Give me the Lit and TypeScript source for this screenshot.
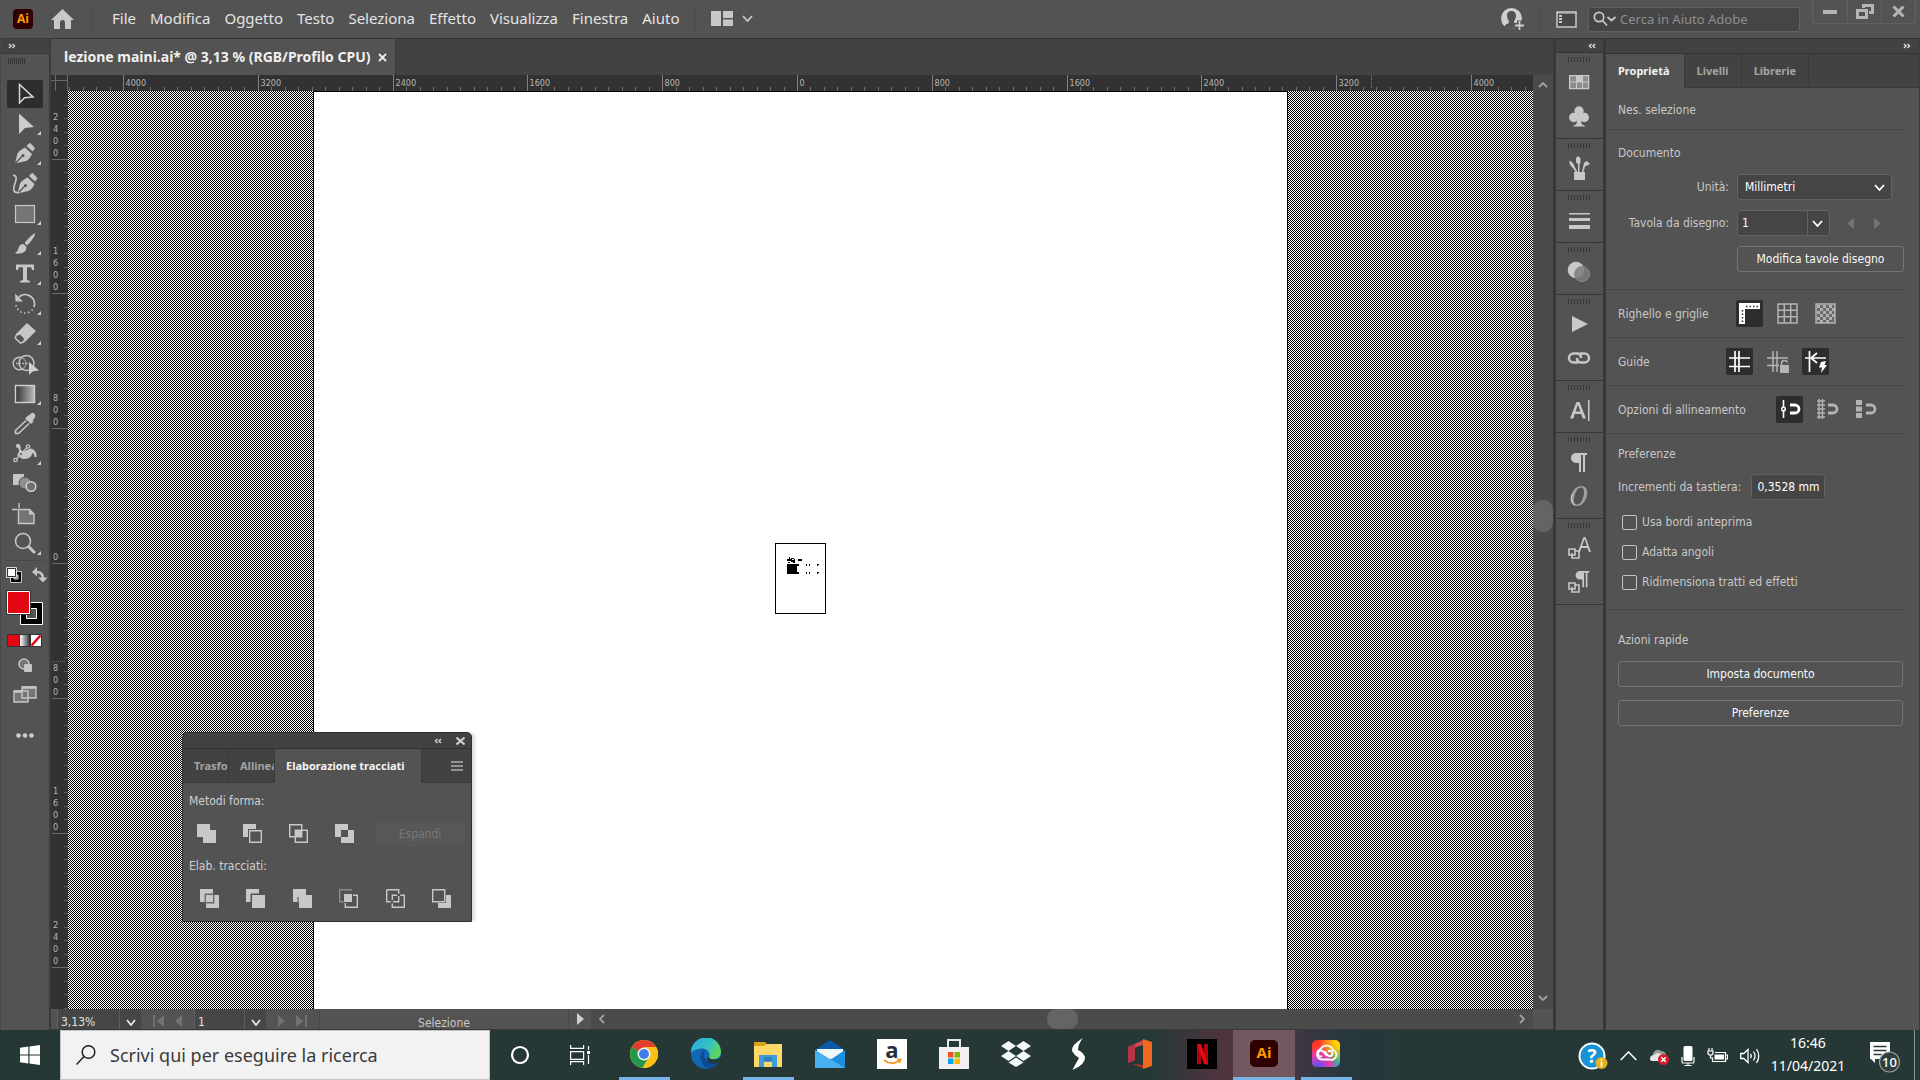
import { LitElement, html, svg, css, nothing, type TemplateResult, type SVGTemplateResult } from "lit";
import { customElement, property } from "lit/decorators.js";
import { classMap } from "lit/directives/class-map.js";

const icon = (w: number, h: number, body: SVGTemplateResult | SVGTemplateResult[]): TemplateResult =>
  html`<svg width=${w} height=${h} viewBox="0 0 ${w} ${h}" aria-hidden="true">${body}</svg>`;

const chevron = (dir: "down" | "up" | "left" | "right", w = 10, h = 6): TemplateResult => {
  const d = {
    down: `M1 1 L${w / 2} ${h - 1} L${w - 1} 1`,
    up: `M1 ${h - 1} L${w / 2} 1 L${w - 1} ${h - 1}`,
    left: `M${w - 1} 1 L1 ${h / 2} L${w - 1} ${h - 1}`,
    right: `M1 1 L${w - 1} ${h / 2} L1 ${h - 1}`,
  }[dir];
  return icon(w, h, svg`<path d=${d} fill="none" stroke="currentColor" stroke-width="1.8"/>`);
};

const doubleLeft = icon(8, 6, svg`<path d="M3.500 1 L1.500 3 L3.500 5 M7 1 L5 3 L7 5" fill="none" stroke="currentColor" stroke-width="1.500"/>`);
const doubleRight = icon(8, 6, svg`<path d="M1 1 L3 3 L1 5 M4.500 1 L6.500 3 L4.500 5" fill="none" stroke="currentColor" stroke-width="1.500"/>`);

const shared = css`
  *, *::before, *::after { box-sizing: border-box; }
  svg { display: block; flex: none; }
  button, input, select {
    font: inherit; color: inherit; margin: 0; padding: 0; border: 0;
    background: none; border-radius: 0; outline: 0; min-width: 0;
  }
  button { display: flex; align-items: center; justify-content: center; }
  select { appearance: none; }
`;

/* ---------- Top menu bar ---------- */

@customElement("menu-bar")
class MenuBar extends LitElement {
  static styles = [shared, css`
    :host {
      display: flex; align-items: center; height: 38px; background: #535353; color: #e4e4e4;
      font: 15px/20px "Noto Sans", "Open Sans", sans-serif; padding-left: 13px;
    }
    .logo {
      width: 20px; height: 20px; border-radius: 4px; background: #310000; color: #ff9a00;
      font: bold 12px/19px "Open Sans", sans-serif; text-align: center; margin-right: 18px;
    }
    .rule { width: 1px; height: 26px; background: #484848; flex: none; }
    nav { display: flex; gap: 14px; margin: 0 14px 0 20px; padding-bottom: 2px; }
    nav a { color: inherit; text-decoration: none; white-space: nowrap; }
    .home { color: #c8c8c8; margin-right: 17px; }
    .arrange { gap: 9px; color: #c8c8c8; margin-left: 16px; padding-bottom: 2px; }
    .spacer { flex: 1; }
    .user { margin-right: 14px; }
    .panel { margin: 0 11px 0 16px; }
    .find {
      display: flex; align-items: center; width: 212px; height: 25px; background: #454545;
      border: 1px solid #616161; border-radius: 3px; padding-left: 4px; margin-right: 12px;
    }
    .find input { flex: 1; font-size: 13px; padding-left: 3px; }
    .find input::placeholder { color: #8e8e8e; opacity: 1; }
    .window {
      align-self: flex-start; display: flex; height: 24px; border: 1px solid #606060; border-top: 0;
      border-radius: 0 0 4px 4px; margin-right: 4px;
    }
    .window button { width: 34px; height: 23px; }
    .window button + button { border-left: 1px solid #606060; }
  `];

  render() {
    const items = ["File", "Modifica", "Oggetto", "Testo", "Seleziona", "Effetto", "Visualizza", "Finestra", "Aiuto"];
    return html`
      <div class="logo">Ai</div>
      <button class="home" aria-label="Home">${icon(23, 20, svg`<path fill="currentColor" d="M11.500 0 L23 11 H20 V20 H14 V13.500 Q14 11 11.500 11 Q9 11 9 13.500 V20 H3 V11 H0 Z"/>`)}</button>
      <div class="rule"></div>
      <nav>${items.map((t) => html`<a href="#">${t}</a>`)}</nav>
      <div class="rule"></div>
      <button class="arrange" aria-label="Disponi documenti">
        ${icon(22, 15, svg`<path fill="currentColor" d="M0 0h10v15H0z M12 0h10v7H12z M12 8.500h10V15H12z"/>`)}
        ${chevron("down", 11, 7)}
      </button>
      <div class="spacer"></div>
      <button class="user" aria-label="Account">
        ${icon(24, 23, svg`
          <circle cx="10.500" cy="10.500" r="10.500" fill="#cfcfcf"/>
          <path fill="#535353" d="M10.500 3 C14 3 15 5.500 15 8 C15 11 13 12 13 14 C13 15.500 15 16 16 18 Q14 21 10.500 21 Q6 21 3.500 18.500 C4 16 8 16 8 14 C8 12 6 11 6 8 C6 5.500 7 3 10.500 3Z"/>
          <path stroke="#535353" stroke-width="5" d="M18.500 12.500 V23 M13.500 17.500 H24"/>
          <path stroke="#cfcfcf" stroke-width="1.800" d="M18.500 13 V22 M14 17.500 H23"/>`)}
      </button>
      <div class="rule"></div>
      <button class="panel" aria-label="Area di lavoro">
        ${icon(21, 17, svg`<rect x="1" y="1" width="19" height="15" fill="#484848" stroke="#c8c8c8" stroke-width="1.500"/>
          <path stroke="#c8c8c8" d="M0 2h21"/><path fill="#c8c8c8" d="M3 4h3v2H3zM3 7h3v2H3zM3 10h3v2H3z"/>`)}
      </button>
      <label class="find">
        ${icon(24, 16, svg`<circle cx="6" cy="6" r="4.700" fill="none" stroke="#c8c8c8" stroke-width="1.700"/><path d="M9.500 9.500 L14 14.500 M14.500 6 L18.500 9.500 L22.500 6" fill="none" stroke="#c8c8c8" stroke-width="1.700"/>`)}
        <input type="search" aria-label="Cerca" placeholder="Cerca in Aiuto Adobe" />
      </label>
      <div class="window">
        <button aria-label="Riduci">${icon(14, 4, svg`<path fill="#b4b4b4" d="M0 0h14v4H0z"/>`)}</button>
        <button aria-label="Ripristina">${icon(18, 15, svg`<path fill="none" stroke="#b4b4b4" stroke-width="3" d="M7.500 4 V1.500 H16.500 V8.500 H13 M1.500 6.500 H10.500 V13.500 H1.500Z"/>`)}</button>
        <button aria-label="Chiudi">${icon(13, 11, svg`<path stroke="#b4b4b4" stroke-width="3" d="M1.500 0.500 L11.500 10.500 M11.500 0.500 L1.500 10.500"/>`)}</button>
      </div>`;
  }
}

/* ---------- Tool column ---------- */

const C = "#c6c6c6";
const corner = svg`<path fill="#d0d0d0" d="M34 22 V26 H30Z"/>`;
const nib = svg`
  <path fill=${C} d="M8 24.500 L10.500 14.500 Q12 11.500 18 8.500 L25 15 Q22.500 20.500 19 22 Z"/>
  <path fill=${C} d="M19.500 7 L22.500 4 Q24 4 28 9.500 L25.500 12.500 Z"/>
  <path stroke="#535353" stroke-width="1.200" d="M8 24.500 L15.500 17"/><circle cx="16" cy="16.500" r="1.500" fill="#535353"/>`;

interface Tool { name: string; art: SVGTemplateResult; more?: boolean; active?: boolean }

const tools: Tool[] = [
  { name: "Selezione", active: true, art: svg`<path fill="none" stroke="#d8d8d8" stroke-width="1.500" d="M12.500 5.500 V24 L17.500 18.800 L26 18 Z"/>` },
  { name: "Selezione diretta", more: true, art: svg`<path fill="#cccccc" d="M12 4.500 V25 L18 19 L27 18 Z"/>` },
  { name: "Penna", more: true, art: nib },
  { name: "Curvatura", art: svg`<g transform="translate(2.500 0)">${nib}</g><path fill="none" stroke=${C} stroke-width="1.700" d="M6 6.500 C11 6 9 12 7.500 16 S6 24.500 12 23.500"/>` },
  { name: "Rettangolo", more: true, art: svg`<rect x="8.500" y="6.500" width="19" height="17" fill="#757575" stroke=${C} stroke-width="1.200"/>` },
  { name: "Pennello", more: true, art: svg`<path fill=${C} d="M28.500 4 Q25 5 17.500 14 L20 16.500 Q27.500 9 28.500 4Z M16.500 15 L19.500 18 Q19.500 24 12 24.500 Q9 25 8 24 Q10.500 23 11.500 19 Q12.500 15 16.500 15Z"/>` },
  { name: "Testo", more: true, art: svg`<path fill=${C} d="M9 5.500 H27 V11 H25 L24.200 8.300 H20 V21 L23 22 V23.500 H13 V22 L16 21 V8.300 H11.800 L11 11 H9Z"/>` },
  { name: "Ruota", more: true, art: svg`<path fill="none" stroke=${C} stroke-width="1.800" d="M12 8 A9.300 9.300 0 0 1 27 18"/><path fill=${C} d="M8 4.500 L8.500 12.500 L16 12.500Z"/><path fill="none" stroke=${C} stroke-width="1.600" stroke-dasharray="1.500 2.500" d="M9 16 A9.300 9.300 0 0 0 26.500 19"/>` },
  { name: "Gomma", more: true, art: svg`<path fill=${C} d="M20 4 L29 12 L18 23 L9 15Z"/><path fill="none" stroke=${C} stroke-width="1.600" d="M10 15 L8.500 18 V19.500 L13.500 24 L17.500 22.500"/><path fill="#535353" d="M9.800 17.500 L13 15.500 L17.500 20 L14 22.500Z"/>` },
  { name: "Creazione forme", art: svg`<circle cx="12.500" cy="14.500" r="6.300" fill="none" stroke=${C} stroke-width="1.400"/><circle cx="19.500" cy="14" r="7.500" fill="#535353" fill-opacity=".5" stroke=${C} stroke-width="1.400"/><path stroke=${C} stroke-width="1.600" stroke-dasharray="1.600 1.600" d="M9 14.500H23"/><path fill="#cfcfcf" d="M22 13 V26 L25.500 22.500 L32 21.500Z"/>` },
  { name: "Sfumatura", more: true, art: svg`<rect x="8.500" y="6.500" width="19" height="17" fill="url(#tg)" stroke="#d0d0d0" stroke-width="1.400"/>` },
  { name: "Contagocce", art: svg`<path fill="none" stroke=${C} stroke-width="1.700" d="M19 11.500 L8.500 21.500 V24.500 H11.500 L22 14.500"/><path fill=${C} d="M22.500 6 Q26 2 28 5.500 Q29 8 26 11 L26.500 12.500 L24 15 L18 9.500 L20.500 7Z"/>` },
  { name: "Alterazione marionetta", more: true, art: svg`<path fill=${C} d="M9 8 Q9 4 12 5 Q14 6 13.500 10 Q15 14 20 11 Q24 8 27 11 Q30 14 29.500 18 L27.500 18 Q27 14 25.500 14 Q24 20 17 20 Q14 20 12.500 18 L10 16 Q13 13 11.500 9.500Z"/><path fill="none" stroke=${C} stroke-width="1.300" d="M8.500 21 L20 8.500"/><circle cx="8.500" cy="21" r="1.700" fill="#535353" stroke=${C} stroke-width="1.300"/><circle cx="14" cy="15" r="1.500" fill="#535353" stroke=${C}/><circle cx="21" cy="7.500" r="1.700" fill="#535353" stroke=${C} stroke-width="1.300"/>` },
  { name: "Fusione", art: svg`<path fill=${C} d="M6 5h11v11H6z"/><circle cx="18" cy="14" r="6" fill="#8e8e8e" stroke="#535353"/><circle cx="24" cy="17.500" r="4.800" fill="#707070" stroke="#d2d2d2" stroke-width="1.500"/>` },
  { name: "Tavola da disegno", art: svg`<path fill="#757575" stroke=${C} stroke-width="1.400" d="M11.500 10.500 H22.500 L27 15 V24.500 H11.500Z"/><path fill=${C} d="M22 10 V15.500 H27.500Z"/><path stroke=${C} stroke-width="1.400" d="M5 10.500 H10.500 M12 4 V9"/>` },
  { name: "Zoom", more: true, art: svg`<circle cx="16" cy="12" r="7.500" fill="none" stroke=${C} stroke-width="1.600"/><path stroke=${C} stroke-width="3" d="M21 17 L28 24"/>` },
];

@customElement("tool-column")
class ToolColumn extends LitElement {
  static styles = [shared, css`
    :host { display: flex; flex-direction: column; background: #535353; border-right: 2px solid #3c3c3c; border-left: 1px solid #474747; }
    header { height: 16px; background: #424242; border: solid #383838; border-width: 1px 0; color: #d0d0d0; padding: 4px 7px; }
    .grip { height: 6px; width: 18px; margin: 4px 0 16px 7px; background: repeating-linear-gradient(90deg, #353535 0 1px, transparent 1px 2px); }
    .tool { width: 36px; height: 28px; margin: 0 0 2px 6px; }
    .tool svg { margin: -1px 0; }
    .active { background: #2d2d2d; border-radius: 2px; }
    .swatches { border-top: 1px solid #494949; margin: 0 5px 2px; padding-top: 6px; }
    .extra { height: 48px; width: 36px; margin-left: 6px; }
  `];

  render() {
    return html`
      <header>${doubleRight}</header>
      <div class="grip"></div>
      ${tools.map((t) => html`
        <button class=${classMap({ tool: true, active: !!t.active })} aria-label=${t.name}>
          ${icon(36, 30, svg`<defs><linearGradient id="tg"><stop offset="0" stop-color="#333"/><stop offset="1" stop-color="#bbb"/></linearGradient></defs>${t.art}${t.more ? corner : nothing}`)}
        </button>`)}
      <div class="swatches">
        ${icon(42, 82, svg`
          <defs><linearGradient id="sg"><stop offset="0" stop-color="#fff"/><stop offset="1" stop-color="#444"/></linearGradient></defs>
          <path fill="none" stroke="#c6c6c6" d="M4.500 4.500h11v11h-11z"/><path fill="#000" d="M5 5h10v10H5z"/><path fill="#535353" stroke="#ddd" d="M8 8h4v4H8z"/>
          <path fill="#fff" stroke="#333" stroke-width="1" d="M1.500 1.500h8v8h-8z"/><path fill="none" stroke="#d8d8d8" d="M.5 .5h10v10h-10z"/>
          <path fill="none" stroke="#c6c6c6" stroke-width="2.600" d="M30 5 Q37 4.500 37 12"/><path fill="#c6c6c6" d="M31 0 V9.500 L26 5Z M32 10.500 H41.500 L37 15.500Z"/>
          <path fill="#000" stroke="#fff" d="M14.500 35.500 h22 v22 h-22z"/><path fill="#535353" stroke="#fff" d="M20.500 41.500h10v10h-10z"/>
          <path fill="#e30613" stroke="#fff" d="M1.500 24.500 h22 v22 h-22z"/><path fill="none" stroke="#333" d="M.5 23.500 h24 v24 h-24z"/>
          <path fill="#333" d="M1 67 h35v13H1z"/><path fill="#e30613" d="M2 68h11v11H2z"/><path fill="url(#sg)" d="M14 68h9v11h-9z"/>
          <path fill="#fff" d="M25 68h10v11H25z"/><path stroke="#e30613" stroke-width="2.500" d="M25.500 78.500 L34.500 68.500"/>`)}
      </div>
      <button class="tool" aria-label="Modalità di disegno">${icon(14, 14, svg`<circle cx="6" cy="6" r="5" fill="#757575" stroke=${C} stroke-width="1.500"/><rect x="6" y="6" width="8" height="8" rx="1" fill=${C}/>`)}</button>
      <button class="tool" aria-label="Modalità schermo">${icon(24, 18, svg`<path fill="#757575" stroke=${C} stroke-width="1.400" d="M1 5h14v11H1zM9 1h14v11H9z"/><path stroke=${C} stroke-width="2.500" d="M1 5.500h8M9 1.500h14"/>`)}</button>
      <button class="extra" aria-label="Altri strumenti">${icon(18, 5, svg`<g fill="#cfcfcf"><circle cx="2.500" cy="2.500" r="2.300"/><circle cx="9" cy="2.500" r="2.300"/><circle cx="15.500" cy="2.500" r="2.300"/></g>`)}</button>`;
  }
}

/* ---------- Document window ---------- */

const TICK = 13.476; /* one minor ruler division, in pixels */

@customElement("ruler-strip")
class RulerStrip extends LitElement {
  @property({ type: Boolean }) vertical = false;
  @property({ type: Number }) zero = 0;
  @property({ type: Number }) cursor = 0;
  @property({ type: Number }) before = 54;
  @property({ type: Number }) after = 54;

  static styles = [shared, css`
    :host { display: block; overflow: hidden; background: #323232; min-width: 0; min-height: 0; contain: size; }
    text { font: 9px "DejaVu Sans Condensed", "DejaVu Sans", sans-serif; fill: #b6b6b6; }
    path { shape-rendering: crispEdges; }
  `];

  render() {
    const ticks = Array.from({ length: this.before + this.after + 1 }, (_, i) => i - this.before);
    const at = (i: number) => Math.round(this.zero + i * TICK) + 0.5;
    const major = ticks.filter((i) => i % 10 === 0);
    const minor = ticks.filter((i) => i % 10 !== 0);
    if (this.vertical) {
      return html`<svg width="100%" height="100%" aria-hidden="true">
        <path stroke="#5a5a5a" d=${minor.map((i) => `M13 ${at(i)}h4`).join("")}/>
        <path stroke="#6a6a6a" d=${major.map((i) => `M1 ${at(i)}h16`).join("")}/>
        <path stroke="#6a6a6a" stroke-dasharray="1 1" d="M1 ${this.cursor + 0.5}h14"/>
        ${major.map((i) => {
          const digits = String(Math.abs(i) * 80).split("");
          return digits.map((c, k) => svg`<text x="2" y=${at(i) - 4 - (digits.length - 1 - k) * 12}>${c}</text>`);
        })}
      </svg>`;
    }
    return html`<svg width="100%" height="100%" aria-hidden="true">
      <path stroke="#6e6e6e" d=${minor.map((i) => `M${at(i)} 12v4`).join("")}/>
      <path stroke="#808080" d=${major.map((i) => `M${at(i)} 0v16`).join("")}/>
      <path stroke="#808080" stroke-dasharray="1 1" d="M${this.cursor + 0.5} 0v14"/>
      ${major.map((i) => svg`<text x=${at(i) + 2} y="11">${Math.abs(i) * 80}</text>`)}
    </svg>`;
  }
}

@customElement("document-window")
class DocumentWindow extends LitElement {
  static styles = [shared, css`
    :host {
      display: grid; grid-template: 37px 16px 1fr 21px / 17px 1fr 20px; min-width: 0; min-height: 0;
      background: #424242; position: relative; color: #e0e0e0;
      font: 12px/16px "DejaVu Sans Condensed", "DejaVu Sans", sans-serif;
    }
    .tabs { grid-column: 1 / -1; border-top: 1px solid #333; }
    .tab {
      display: inline-flex; align-items: center; gap: 8px; height: 36px; padding: 0 8px 0 13px; background: #535353;
      font: bold 14px/16px "Noto Sans", "Open Sans", sans-serif; color: #f0f0f0; border-right: 1px solid #3a3a3a;
    }
    .corner { background: #323232; }
    .canvas {
      grid-column: 2; grid-row: 3; display: flex; justify-content: center; overflow: hidden; position: relative;
      background: conic-gradient(#000 25%, #fff 0 50%, #000 0 75%, #fff 0) 0 0 / 2px 2px;
    }
    .left { grid-column: 1; grid-row: 3; }
    .sheet { width: 975px; background: #fff; border: 1px solid #000; border-bottom: 0; }
    .artboard { position: absolute; left: calc(50% - 26px); top: 452px; border: 1px solid #000; }
    .vbar {
      grid-column: 3; grid-row: 2 / 4; background: #4b4b4b; color: #a0a0a0; display: flex; flex-direction: column;
      align-items: center; padding: 7px 0 8px; position: relative;
    }
    .thumb { background: #646464; border-radius: 9px; }
    .vbar .thumb { width: 20px; height: 32px; }
    .above { flex: 408; }
    .below { flex: 459; }
    .status { grid-column: 1 / -1; display: flex; background: #535353; border-bottom: 1px solid #3a3a3a; align-items: stretch; overflow: hidden; }
    .status input { width: 50px; height: 20px; background: #464646; padding: 5px 0 0 3px; border-left: 1px solid #606060; }
    .status .drop { width: 22px; background: #464646; padding-top: 6px; border-left: 1px solid #5c5c5c; color: #e8e8e8; }
    .zoom { display: flex; margin-left: 6px; }
    .zoom input { width: 62px; }
    .pager { display: flex; justify-content: center; gap: 11px; width: 53px; color: #727272; padding-top: 4px; }
    .mode { width: 250px; border-left: 1px solid #484848; border-right: 1px solid #484848; text-align: center; padding-top: 6px; color: #c8c8c8; }
    .play { width: 22px; color: #d0d0d0; }
    .hbar { flex: 1; background: #4b4b4b; display: flex; align-items: center; color: #a0a0a0; padding: 0 8px; }
    .hbar .thumb { width: 31px; height: 20px; }
    .hbar .before { flex: 442; }
    .hbar .after { flex: 441; }
    .end { width: 20px; background: #535353; }
  `];

  render() {
    return html`
      <div class="tabs">
        <div class="tab"><span>lezione maini.ai* @ 3,13 % (RGB/Profilo CPU)</span>
          <button aria-label="Chiudi">${icon(9, 9, svg`<path stroke="#eee" stroke-width="1.800" d="M1 1 L8 8 M8 1 L1 8"/>`)}</button>
        </div>
      </div>
      <div class="corner">${icon(17, 16, svg`<path stroke="#6a6a6a" d="M4.500 0V16M0 5.500H16M16.500 0V16"/>`)}</div>
      <ruler-strip .zero=${729} .cursor=${1303}></ruler-strip>
      <ruler-strip class="left" vertical .zero=${472} .cursor=${570} .before=${34} .after=${39}></ruler-strip>
      <div class="vbar">
        ${chevron("up", 10, 6)}
        <div class="above"></div><div class="thumb"></div><div class="below"></div>
        ${chevron("down", 10, 6)}
      </div>
      <div class="canvas">
        <div class="sheet"></div>
        <div class="artboard">${icon(49, 69, svg`
          <g shape-rendering="crispEdges" fill="#000">
            <path d="M11 20h10v10H11zM21 20h2v2h-2zM21 28h2v2h-2zM13 13h1v2h-1zM15 14h3v1h-3zM11 15h3v2h-3zM15 16h3v2h-3zM18 15h1v3h-1zM12 18h2v1h-2zM17 18h2v1h-2zM14 15h2v2h-2zM22 15h4v2h-4zM30 20h1v2h-1zM33 20h1v2h-1zM30 28h1v2h-1zM33 28h1v2h-1zM41 20h2v1h-2zM41 21h1v1h-1zM41 28h2v1h-2zM41 29h1v1h-1z"/>
          </g>`)}</div>
        </div>
      <div class="status">
        <div class="zoom"><input aria-label="Zoom" value="3,13%" /><button class="drop" aria-label="Livelli di zoom">${chevron("down", 10, 7)}</button></div>
        <div class="pager">
          <button aria-label="Prima">${icon(11, 12, svg`<path fill="currentColor" d="M0 0h2v12H0zM11 0v12L3.500 6z"/>`)}</button>
          <button aria-label="Precedente">${icon(7, 12, svg`<path fill="currentColor" d="M7 0v12L0 6z"/>`)}</button>
        </div>
        <input aria-label="Tavola da disegno" value="1" /><button class="drop" aria-label="Elenco tavole">${chevron("down", 10, 7)}</button>
        <div class="pager">
          <button aria-label="Successiva">${icon(7, 12, svg`<path fill="currentColor" d="M0 0v12L7 6z"/>`)}</button>
          <button aria-label="Ultima">${icon(11, 12, svg`<path fill="currentColor" d="M9 0h2v12H9zM0 0v12L7.500 6z"/>`)}</button>
        </div>
        <div class="mode">Selezione</div>
        <button class="play" aria-label="Mostra">${icon(7, 12, svg`<path fill="currentColor" d="M0 0v12L7 6z"/>`)}</button>
        <div class="hbar">${chevron("left", 6, 10)}<div class="before"></div><div class="thumb"></div><div class="after"></div>${chevron("right", 6, 10)}</div>
        <div class="end"></div>
      </div>`;
  }
}

/* ---------- Pathfinder panel ---------- */

const L = "#c8c8c8";
const shapeModes = [
  ["Unisci", svg`<path fill=${L} d="M0 0h13v6h6v13H6v-6H0z"/>`],
  ["Sottrai", svg`<path fill=${L} d="M0 0h13v5H5v8H0z"/><path fill="none" stroke=${L} stroke-width="1.400" d="M6.700 6.700h11.600v11.600H6.700z"/>`],
  ["Interseca", svg`<path fill="none" stroke=${L} stroke-width="1.400" d="M.7 .7h12v12h-12zM6.300 6.300h12v12h-12z"/><path fill=${L} d="M6 6h7v7H6z"/>`],
  ["Escludi", svg`<path fill=${L} fill-rule="evenodd" d="M0 0h13v6h6v13H6v-6H0zM6 6v7h7V6z"/>`],
] as const;
const pathfinders = [
  ["Dividi", svg`<path fill=${L} d="M0 0h13v6h6v13H6v-6H0z"/><path fill="none" stroke="#6a6a6a" stroke-width="1.400" d="M5.300 5.300h8.400v8.400H5.300z"/>`],
  ["Taglia", svg`<path fill=${L} d="M0 0h13v4.500H4.500V13H0zM6 6h13v13H6z"/>`],
  ["Combina", svg`<path fill=${L} d="M0 0h13v6h6v13H6v-6H0z"/><path stroke="#6a6a6a" stroke-width="1.400" d="M5 8v6"/>`],
  ["Ritaglia", svg`<path fill="none" stroke="#8c8c8c" stroke-width="1.400" d="M13 .7H.7v12h4"/><path fill="none" stroke=${L} stroke-width="1.400" d="M14 6.300h4.300v12h-12V14"/><path fill=${L} d="M5 5h8v8H5z"/>`],
  ["Contorno", svg`<path fill="none" stroke=${L} stroke-width="1.400" d="M.7 .7h12v4M.7 .7v12h4M6.300 14.500v3.800h12v-12h-4M12.700 7v5.700H7M6.300 11V6.300H11"/>`],
  ["Meno sotto", svg`<path fill=${L} d="M14 6h5v13H6v-5h8z"/><path fill="none" stroke=${L} stroke-width="1.400" d="M.7 .7h12v12h-12z"/>`],
] as const;

@customElement("pathfinder-panel")
class PathfinderPanel extends LitElement {
  static styles = [shared, css`
    :host {
      display: block; width: 290px; background: #535353; border: 1px solid #303030; border-radius: 5px 5px 0 0; color: #d0d0d0;
      font: 12px/16px "DejaVu Sans Condensed", "DejaVu Sans", sans-serif; box-shadow: 4px 0 3px -1px #00000022; padding-bottom: 6px;
    }
    header { display: flex; align-items: center; justify-content: flex-end; gap: 14px; height: 16px; padding-right: 6px; background: #424242; border-bottom: 1px solid #303030; border-radius: 5px 5px 0 0; }
    .tabs { display: flex; height: 34px; background: #424242; font: bold 11px/32px "Noto Sans", "Open Sans", sans-serif; border-bottom: 1px solid #3a3a3a; margin-bottom: 10px; color: #a4a4a4; }
    .tabs button { width: 46px; justify-content: flex-start; overflow: hidden; padding-left: 11px; border-right: 1px solid #3a3a3a; white-space: nowrap; }
    .tabs button.on { width: 147px; background: #535353; color: #f4f4f4; height: 34px; }
    .tabs .menu { margin-left: auto; width: 28px; border: 0; padding: 0 0 0 8px; }
    p { margin: 0 6px; }
    .row { display: flex; align-items: center; height: 49px; padding-right: 6px; }
    .row button { width: 46px; }
    .row.wide { height: 34px; margin-top: 7px; padding-left: 3px; }
    .row.wide button { width: 47px; }
    .row .expand { margin-left: 8px; flex: 1; height: 24px; background: #575757; color: #777; }
  `];

  render() {
    return html`
      <header>
        <button aria-label="Riduci">${doubleLeft}</button>
        <button aria-label="Chiudi">${icon(9, 8, svg`<path stroke="#d0d0d0" stroke-width="2" d="M.5 .5 L8.500 7.500 M8.500 .5 L.5 7.500"/>`)}</button>
      </header>
      <div class="tabs">
        <button>Trasfo</button><button>Allinea</button><button class="on">Elaborazione tracciati</button>
        <button class="menu" aria-label="Menu">${icon(12, 10, svg`<path stroke="#b0b0b0" stroke-width="1.300" d="M0 1h12M0 5h12M0 9h12"/>`)}</button>
      </div>
      <p>Metodi forma:</p>
      <div class="row">
        ${shapeModes.map(([n, a]) => html`<button aria-label=${n}>${icon(19, 19, a)}</button>`)}
        <button class="expand" disabled>Espandi</button>
      </div>
      <p>Elab. tracciati:</p>
      <div class="row wide">${pathfinders.map(([n, a]) => html`<button aria-label=${n}>${icon(19, 19, a)}</button>`)}</div>`;
  }
}

/* ---------- Collapsed panel dock ---------- */

const pilcrow = svg`<path fill=${L} d="M8 0H19V2H17V19H15V2H13V19H11V10H8A5 5 0 0 1 8 0Z"/>`;
const dockGroups: [string, SVGTemplateResult][][] = [
  [
    ["Campioni", svg`<g transform="translate(2 5)"><path fill="#8c8c8c" stroke=${L} stroke-width="1.300" d="M.6 .6h19v13H.6z"/><path fill=${L} d="M8 1h6v6H8z"/><path stroke=${L} d="M.5 7h19M7.500 0v14M13.500 0v14"/></g>`],
    ["Simboli", svg`<g fill=${L}><circle cx="12" cy="7" r="4.700"/><circle cx="6.700" cy="13.500" r="4.700"/><circle cx="17.300" cy="13.500" r="4.700"/><path d="M11 10h2.500l1 10 4 2.500h-13l4-2.500z"/></g>`],
  ],
  [["Pennelli", svg`<path fill=${L} d="M7 16h11v8H7zM2.500 4.500Q7 7 7.500 10.500L10.500 16H8.500L6 12Q2 9 2.500 4.500zM9 2l2-2 2.500 2v4.500L12.500 8v8h-1.500V8L9 6.500zM15 16l1.500-7Q17 5.500 20 5l3 3-3 1.500-2 1L16.500 16z"/>`]],
  [["Traccia", svg`<path fill=${L} d="M2 5h21v1.600H2zM2 10h21v3H2zM2 17h21v4H2z"/>`]],
  [["Trasparenza", svg`<circle cx="9" cy="10" r="8.300" fill=${L}/><circle cx="15" cy="14" r="7.500" fill="#7c7c7c" fill-opacity=".85" stroke="#8c8c8c"/>`]],
  [
    ["Azioni", svg`<path fill=${L} d="M5 4v16l16-8z"/>`],
    ["Collegamenti", svg`<g fill="none" stroke=${L} stroke-width="2.500"><path d="M11 16.500H6.500a4.500 4.500 0 0 1 0-9H10q4 0 4 4.500"/><path d="M13 7.500h4.500a4.500 4.500 0 0 1 0 9H14q-4 0-4-4.500"/></g>`],
  ],
  [["Carattere", svg`<path fill=${L} fill-rule="evenodd" d="M3 20.500 L9.500 4h3L19 20.500h-3.300L14.300 16H7.700L6.300 20.500zM8.600 13.500h4.800L11 6.800z"/><path fill=${L} d="M21 2h1.500v21H21z"/>`]],
  [
    ["Paragrafo", svg`<g transform="translate(1 3)">${pilcrow}</g>`],
    ["OpenType", svg`<path fill="#a0a0a0" fill-rule="evenodd" d="M14 2 C19 2 21 6 20 11 C19 17 15 22 10 22 C5 22 3 18 4 13 C5 7 9 2 14 2Z M14 3.500 C10 3.500 7.500 10 7 15 C6.700 19 8 20.500 10 20.500 C14 20.500 16.500 14 17 9 C17.300 5 16 3.500 14 3.500Z"/><path fill="none" stroke="#d4d4d4" d="M8 21 C4 19 3.500 15 5 10"/>`],
  ],
  [
    ["Stili di carattere", svg`<path fill="none" stroke=${L} stroke-width="1.600" d="M2 13h6v6H2zM5 17v5h7v-7H8"/><path fill=${L} fill-rule="evenodd" d="M11 16 L16.500 1h2L24 16h-2L20.500 12h-6L13 16zM15 10h5l-2.500-7z"/>`],
    ["Stili di paragrafo", svg`<path fill="none" stroke=${L} stroke-width="1.600" d="M2 13h6v6H2zM5 17v5h7v-7H8"/><g transform="translate(6 1) scale(.85)">${pilcrow}</g>`],
  ],
];

@customElement("panel-dock")
class PanelDock extends LitElement {
  static styles = [shared, css`
    :host { display: block; background: #535353; border: solid #383838; border-width: 0 3px; }
    header { display: flex; align-items: center; justify-content: flex-end; height: 15px; padding-right: 7px; background: #424242; border: solid #333; border-width: 1px 0; color: #d8d8d8; }
    section { display: grid; justify-items: center; grid-auto-rows: 34px; padding: 12px 0 5px; border-bottom: 1px solid #363636; position: relative; }
    section::before {
      content: ""; position: absolute; top: 4px; left: 12px; width: 24px; height: 5px;
      background: repeating-linear-gradient(90deg, #353535 0 1px, transparent 1px 3px);
    }
  `];
  render() {
    return html`<header>${doubleLeft}</header>
      ${dockGroups.map((g) => html`<section>${g.map(([n, a]) => html`<button aria-label=${n}>${icon(25, 25, a)}</button>`)}</section>`)}`;
  }
}

/* ---------- Properties panel ---------- */

const magnet = svg`<path fill="none" stroke="currentColor" stroke-width="2.800" d="M11 6h5a4 4 0 0 1 0 8h-5"/>`;
const toggles: Record<string, [string, boolean, SVGTemplateResult][]> = {
  rulers: [
    ["Righelli", true, svg`<path fill="#fff" d="M0 0h21v6H6v15H0z"/><path stroke="#2d2d2d" stroke-width="1.500" stroke-dasharray="1.500 2" d="M7 3.500h13M3.500 7v13"/>`],
    ["Griglia", false, svg`<path fill="none" stroke="currentColor" stroke-width="1.500" d="M1 1h19v19H1zM7.300 1v19M13.700 1v19M1 7.300h19M1 13.700h19"/>`],
    ["Griglia trasparenza", false, svg`<path fill="#6a6a6a" stroke="currentColor" stroke-width="1.400" d="M1 1h19v19H1z"/><path fill="#b0b0b0" d="M2 2h3v3H2zM8 2h3v3H8zM14 2h3v3h-3zM5 5h3v3H5zM11 5h3v3h-3zM17 5h3v3h-3zM2 8h3v3H2zM8 8h3v3H8zM14 8h3v3h-3zM5 11h3v3H5zM11 11h3v3h-3zM17 11h3v3h-3zM2 14h3v3H2zM8 14h3v3H8zM14 14h3v3h-3zM5 17h3v3H5zM11 17h3v3h-3z"/>`],
  ],
  guides: [
    ["Mostra guide", true, svg`<path stroke="currentColor" stroke-width="1.700" d="M6 0v21M10 0v21M0 7h21M0 15.500h21"/>`],
    ["Blocca guide", false, svg`<path stroke="currentColor" stroke-width="1.500" d="M6 0v21M10 0v21M0 7h21M0 14.500h12"/><path fill="#535353" d="M12 8h10v13H12z"/><path fill="currentColor" d="M13 14h9v8h-9z"/><path fill="none" stroke="currentColor" stroke-width="1.500" d="M14.500 14v-1.500q0-3 3-3 2.500 0 3 2"/>`],
    ["Guide sensibili", true, svg`<path fill="none" stroke="currentColor" stroke-width="1.700" d="M4.500 0v21M0 7h21M12 2l-6 5 6 5"/><path fill="currentColor" d="M16 11l5-1-1.500 4h2.500l-6 8 1-5.500h-3z"/>`],
  ],
  snap: [
    ["Allinea al punto", true, svg`<path stroke="currentColor" stroke-width="1.600" d="M4.500 1v18"/><circle cx="4.500" cy="10" r="1.800" fill="#2d2d2d" stroke="currentColor" stroke-width="1.500"/>${magnet}`],
    ["Allinea alla griglia", false, svg`<path fill="none" stroke="currentColor" stroke-width="1.400" d="M2 0v20M5.500 0v20M0 2h8M0 6h8M0 10h8M0 14h8M0 18h8"/>${magnet}`],
    ["Allinea ai pixel", false, svg`<path fill="currentColor" d="M1 1h6v5H1zM1 7.500h6v5H1zM1 14h6v5H1z"/>${magnet}`],
  ],
};

@customElement("properties-panel")
class PropertiesPanel extends LitElement {
  static styles = [shared, css`
    :host {
      display: block; background: #535353; color: #c8c8c8; border-right: 1px solid #3c3c3c;
      font: 12px/16px "DejaVu Sans Condensed", "DejaVu Sans", sans-serif;
    }
    header { display: flex; align-items: center; justify-content: flex-end; height: 16px; padding-right: 8px; background: #424242; border: solid #333; border-width: 1px 0; color: #d8d8d8; }
    .tabs { display: flex; height: 34px; background: #424242; font: bold 11px/32px "Noto Sans", "Open Sans", sans-serif; color: #a4a4a4; border-bottom: 1px solid #3a3a3a; }
    .tabs button { padding: 0 12px; border-right: 1px solid #3a3a3a; }
    .tabs button.on { background: #535353; color: #f4f4f4; height: 34px; padding: 0 14px 0 12px; }
    .block { margin-right: 15px; padding-left: 12px; border-bottom: 1px solid #494949; }
    .block:last-child { border: 0; padding-right: 1px; }
    h2 { font: inherit; margin: 0; }
    .none { padding-top: 14px; height: 42px; }
    .doc { height: 160px; padding-top: 15px; }
    .form { display: grid; grid-template-columns: 111px 1fr; gap: 10px 8px; align-items: center; margin-top: 13px; }
    .form label { text-align: right; white-space: nowrap; }
    .pick { display: grid; width: 155px; height: 26px; border: 1px solid #636363; border-radius: 3px; background: #454545; color: #fff; align-items: center; }
    .pick > * { grid-area: 1 / 1; }
    .pick select { height: 24px; padding-left: 7px; }
    .pick svg { justify-self: end; margin-right: 6px; pointer-events: none; }
    .board { display: flex; align-items: center; color: #737373; }
    .pick.num { width: 93px; margin-right: 17px; }
    .pick.num select { padding-left: 4px; background: linear-gradient(#636363, #636363) 69px 0 / 1px 100% no-repeat; }
    .board button + button { margin-left: 20px; }
    .outline { height: 26px; border: 1px solid #737373; border-radius: 3px; color: #f8f8f8; width: 100%; }
    .form .outline { grid-column: 2; width: 167px; }
    .toggles { display: flex; align-items: center; height: 48px; }
    .toggles button { width: 27px; height: 27px; border-radius: 2px; color: #b4b4b4; }
    .toggles button + button { margin-left: 11px; }
    .toggles button.on { background: #2d2d2d; color: #fff; }
    .rulers h2 { width: 118px; }
    .guides h2 { width: 108px; }
    .snap h2 { width: 158px; }
    .prefs { height: 176px; padding-top: 12px; }
    .step { display: flex; align-items: center; gap: 10px; margin: 12px 0; }
    .step input { width: 74px; height: 26px; border: 1px solid #616161; border-radius: 3px; background: #454545; color: #fff; padding-left: 5px; }
    .check { display: flex; align-items: center; gap: 5px; margin: 0 0 14px 4px; height: 16px; }
    .step + .check { margin-top: 14px; }
    .check input { appearance: none; width: 15px; height: 15px; border: 1px solid #c4c4c4; border-radius: 2px; }
    .actions { padding-top: 22px; display: grid; gap: 13px; }
  `];

  private toggleRow(kind: string, title: string) {
    return html`<div class="block toggles ${kind}"><h2>${title}</h2>
      ${toggles[kind].map(([n, on, a]) => html`<button class=${classMap({ on })} aria-label=${n}>${icon(22, 22, a)}</button>`)}
    </div>`;
  }

  render() {
    return html`
      <header>${doubleRight}</header>
      <div class="tabs"><button class="on">Proprietà</button><button>Livelli</button><button>Librerie</button></div>
      <div class="block none">Nes. selezione</div>
      <div class="block doc">
        <h2>Documento</h2>
        <div class="form">
          <label for="unit">Unità:</label>
          <div class="pick"><select id="unit"><option>Millimetri</option></select>${chevron("down", 11, 7)}</div>
          <label for="board">Tavola da disegno:</label>
          <div class="board">
            <div class="pick num"><select id="board"><option>1</option></select>${chevron("down", 11, 7)}</div>
            <button aria-label="Precedente">${icon(7, 11, svg`<path fill="currentColor" d="M7 0v11L0 5.500z"/>`)}</button>
            <button aria-label="Successiva">${icon(7, 11, svg`<path fill="currentColor" d="M0 0v11l7-5.500z"/>`)}</button>
          </div>
          <button class="outline">Modifica tavole disegno</button>
        </div>
      </div>
      ${this.toggleRow("rulers", "Righello e griglie")}
      ${this.toggleRow("guides", "Guide")}
      ${this.toggleRow("snap", "Opzioni di allineamento")}
      <div class="block prefs">
        <h2>Preferenze</h2>
        <div class="step"><label for="inc">Incrementi da tastiera:</label><input id="inc" value="0,3528 mm" /></div>
        ${["Usa bordi anteprima", "Adatta angoli", "Ridimensiona tratti ed effetti"].map((t) => html`<label class="check"><input type="checkbox" />${t}</label>`)}
      </div>
      <div class="block actions">
        <h2>Azioni rapide</h2>
        <button class="outline">Imposta documento</button>
        <button class="outline">Preferenze</button>
      </div>`;
  }
}

/* ---------- Taskbar ---------- */

interface App { name: string; art: SVGTemplateResult; open?: boolean; active?: boolean }
const apps: App[] = [
  { name: "Chrome", open: true, art: svg`<circle cx="16" cy="16" r="14" fill="#fbc116"/><path fill="#e33b2e" d="M16 16 L3.900 9 A14 14 0 0 1 28.100 9 H16Z"/><path fill="#229a4c" d="M16 16 L3.900 9 A14 14 0 0 0 14.500 29.900 L21 19Z"/><path fill="#fbc116" d="M28.100 9 A14 14 0 0 1 14.500 29.900 L21.500 18 L20 9.500Z"/><circle cx="16" cy="16" r="6.500" fill="#f4f4f4"/><circle cx="16" cy="16" r="5" fill="#3f7de8"/>` },
  { name: "Edge", art: svg`<defs><linearGradient id="e1" x1="0" y1="0" x2="1" y2=".5"><stop offset="0" stop-color="#2aa7e0"/><stop offset=".6" stop-color="#35c1c8"/><stop offset="1" stop-color="#5fd65a"/></linearGradient></defs><circle cx="16" cy="16" r="15" fill="#1267b5"/><path fill="url(#e1)" d="M1 15 A15 15 0 0 1 31 13.500 C31 20 26 21.500 21.500 21 C18 20.500 19 18.500 19.500 17 C20 13 16 10.500 12 10.500 C7 10.500 2 13 1 15Z"/><path fill="#0d4a92" d="M10.500 18 C10.500 13 14 11.500 15 12.500 C11 20 18 27 28 24.500 A15 15 0 0 1 18 31 C13 29 10.500 23 10.500 18Z"/><path fill="#243836" d="M19.500 18 C18 20 21 22 25 21.500 Q29 21.500 31 19 L31 22 Q28 26 23 25.500 C17 25 15 20 19.500 18Z"/>` },
  { name: "Esplora file", open: true, art: svg`<path fill="#d9a218" d="M2 4h11l3 3v4H2z"/><path fill="#ffd968" d="M2 8h10l3-2h15v23H2z"/><path fill="#3f9bdc" d="M7 17h18v12h-5v-5h-8v5H7z"/><path fill="#2f7fbf" d="M12 19h8v4h-8z"/>` },
  { name: "Posta", art: svg`<path fill="#0a5ba8" d="M1 12 L16 2 L31 12 V20 H1z"/><path fill="#f1f6fb" d="M3 11h26v10H3z"/><path fill="#1d8fdf" d="M1 12 L16 22 L31 12 V30 H1z"/><path fill="#46b0f0" d="M1 12 L16 21 L31 30 H1z"/>` },
  { name: "Amazon", art: svg`<path fill="#fff" d="M1 1h30v30H1z"/><text x="16" y="20" text-anchor="middle" font-family="Open Sans, sans-serif" font-weight="bold" font-size="22" fill="#232f3e">a</text><path fill="none" stroke="#f29a1f" stroke-width="1.800" d="M8 22 Q15.500 28 23 23 M21 21.500l3.500 0-1 3.500"/>` },
  { name: "Store", art: svg`<path fill="none" stroke="#e8e8e8" stroke-width="2" d="M10 10V2h12v8"/><path fill="#f0f0f0" d="M1 9h30v22H1z"/><path fill="#f25022" d="M10 14h5.500v5.500H10z"/><path fill="#7fba00" d="M16.500 14H22v5.500h-5.500z"/><path fill="#00a4ef" d="M10 20.500h5.500V26H10z"/><path fill="#ffb900" d="M16.500 20.500H22V26h-5.500z"/>` },
  { name: "Dropbox", art: svg`<path fill="#f4f8fc" d="M8.500 3l7.500 5-7.500 5L1 8zM23.500 3L31 8l-7.500 5L16 8zM8.500 13l7.500 5-7.500 5L1 18zM23.500 13l7.500 5-7.500 5-7.500-5zM8.500 24.500l7.500-5 7.500 5-7.500 4.500z"/>` },
  { name: "Studio", art: svg`<path fill="#fff" d="M21 0 Q9 7 10 13 Q12 17 17 20 Q14 25 10.500 32 Q24 26 23 19 Q21 14 16 12 Q16 6 21 0Z"/>` },
  { name: "Office", art: svg`<path fill="#d2474c" d="M4 9 L19 2 V7 L11 9.500 V22 L4 25z"/><path fill="#c2321c" d="M8 26 L19 27 V30z"/><path fill="#ef6a1c" d="M19 1l9 3v24l-9 3z"/><path fill="#b83248" d="M4 9l7-3v16l-7 3z"/>` },
  { name: "Netflix", art: svg`<path fill="#000" d="M1 1h30v30H1z"/><path fill="#b1060f" d="M11 6h4v20l-4 .5zM18 6h4v20.500l-4-.5z"/><path fill="#e50914" d="M11 6h4l7 20.500-4-.5z"/>` },
  { name: "Illustrator", open: true, active: true, art: svg`<rect x="2" y="2" width="28" height="27" rx="5" fill="#2f0000"/><text x="16" y="20" text-anchor="middle" font-family="Open Sans, sans-serif" font-weight="bold" font-size="15" fill="#ff9a00">Ai</text>` },
  { name: "Creative Cloud", open: true, art: svg`<defs>
      <linearGradient id="c1" x1="0" y1="0" x2="1" y2="1"><stop offset="0" stop-color="#ff2a1c"/><stop offset=".4" stop-color="#ff4a3c"/><stop offset=".75" stop-color="#2cc07a"/><stop offset="1" stop-color="#2c9cf0"/></linearGradient>
      <radialGradient id="c2" cx="1" cy=".1" r=".75"><stop offset=".2" stop-color="#ffd400"/><stop offset="1" stop-color="#ffd400" stop-opacity="0"/></radialGradient>
      <radialGradient id="c3" cx=".2" cy="1" r=".75"><stop offset=".1" stop-color="#6a4cf5"/><stop offset=".6" stop-color="#e83aa8"/><stop offset="1" stop-color="#e83aa8" stop-opacity="0"/></radialGradient></defs>
      <rect x="2" y="2" width="28" height="27" rx="5" fill="url(#c1)"/><rect x="2" y="2" width="28" height="27" rx="5" fill="url(#c2)"/><rect x="2" y="2" width="28" height="27" rx="5" fill="url(#c3)"/>
      <g fill="none" stroke="#fff" stroke-width="1.800"><path d="M19.500 21.500h-8a5.500 5.500 0 0 1-1-10.500 7 7 0 0 1 12.500 1 5 5 0 0 1-3.500 9.500z"/><path d="M17 18l-4-4.500q-2-2-4 0-2 2.500 0 4.500 1.500 1 3 0M14.500 13l3.500 4.500q2 1.500 3.500 0 2-2 0-4-1.500-1.500-3.500 0"/></g>` },
];

@customElement("task-bar")
class TaskBar extends LitElement {
  static styles = [shared, css`
    :host {
      display: flex; height: 50px; color: #fff; font: 14px/23px "Noto Sans", "Open Sans", sans-serif;
      background: linear-gradient(90deg, #253836 0 60%, #49343e 63%, #55343f 65%, #453743 67%, #27373d 70%, #253836 74%);
    }
    .start { width: 60px; }
    .search { width: 430px; display: flex; align-items: center; background: #f2f2f2; border: 1px solid #c4c4c4; padding-left: 15px; color: #333; }
    .search input { flex: 1; font-size: 18px; padding-left: 14px; }
    .search input::placeholder { color: #3a3a3a; opacity: 1; }
    .sys { width: 60px; }
    .apps { display: flex; flex: 1; margin-left: 3px; }
    .app { width: 62px; border-bottom: 3px solid transparent; position: relative; }
    .app::after { content: ""; position: absolute; left: 6px; right: 5px; bottom: -3px; height: 3px; }
    .open::after { background: #76b3e6; }
    .active { background: #74585f; }
    .active::after { left: 0; right: 0; }
    .tray { display: flex; align-items: center; gap: 12px; padding-top: 2px; }
    .clock { width: 92px; margin-left: 2px; text-align: center; padding-top: 1px; }
    .note { width: 48px; margin-left: 8px; }
    .desktop { width: 6px; border-left: 1px solid #8a9492; margin-left: 4px; }
  `];

  render() {
    return html`
      <button class="start" aria-label="Start">${icon(20, 20, svg`<path fill="#fff" d="M0 2.800 L8.300 1.600 V9.500 H0zM9.500 1.400 L20 0V9.500H9.500zM0 10.500H8.300V18.400L0 17.200zM9.500 10.500H20V20L9.500 18.600z"/>`)}</button>
      <label class="search">
        ${icon(20, 20, svg`<circle cx="12.500" cy="7" r="6.300" fill="none" stroke="#222" stroke-width="1.500"/><path stroke="#222" stroke-width="1.500" d="M8 11.500 L.5 19.500"/>`)}
        <input type="text" aria-label="Cerca" placeholder="Scrivi qui per eseguire la ricerca" />
      </label>
      <button class="sys" aria-label="Cortana">${icon(20, 20, svg`<circle cx="10" cy="10" r="8" fill="none" stroke="#fff" stroke-width="2.200"/>`)}</button>
      <button class="sys" aria-label="Visualizzazione attività">${icon(20, 20, svg`<path fill="none" stroke="#fff" stroke-width="1.200" d="M.6 0v3.400h13V0M.6 6.600h13v7.800H.6zM.6 20v-3.400h13V20M18.500 1v4M18.500 10v9"/><path fill="#fff" d="M17 6h3v3h-3z"/>`)}</button>
      <div class="apps">${apps.map((a) => html`
        <button class=${classMap({ app: true, open: !!a.open, active: !!a.active })} aria-label=${a.name}>${icon(32, 32, a.art)}</button>`)}
      </div>
      <div class="tray">
        <button aria-label="Assistenza">${icon(30, 30, svg`<circle cx="14" cy="15" r="13.500" fill="#fff"/><circle cx="14" cy="15" r="11.500" fill="#1593d8"/><text x="14" y="22" text-anchor="middle" font-family="Open Sans, sans-serif" font-weight="bold" font-size="19" fill="#fff">?</text><circle cx="23.500" cy="22" r="6" fill="#e8b020"/><path fill="#fff" d="M22.700 18h1.600v1.600h-1.600zM22.700 20.800h1.600V26h-1.600z"/>`)}</button>
        <button aria-label="Icone nascoste">${icon(17, 10, svg`<path fill="none" stroke="#fff" stroke-width="1.500" d="M.7 9 L8.500 1 L16.300 9"/>`)}</button>
        <button aria-label="OneDrive">${icon(20, 20, svg`<path fill="#9a9a9a" d="M4 10 a5 5 0 0 1 8-5 q6 0 5 7z"/><path fill="#e6e6e6" d="M1 13 q0-4 4-4 4-4 8 0 5 1 3 6H4q-3 0-3-2z"/><circle cx="14.500" cy="13.500" r="5.500" fill="#d3202c"/><path stroke="#fff" stroke-width="1.500" d="M12.300 11.300l4.400 4.400M16.700 11.300l-4.400 4.400"/>`)}</button>
        <button aria-label="Microfono">${icon(14, 22, svg`<rect x="2.500" y="1" width="9" height="15" rx="1.500" fill="#fff"/><path fill="none" stroke="#fff" stroke-width="1.200" d="M1 12v5q0 1 1 1h10q1 0 1-1v-5M7 18v2.500M3.500 20.500h7"/>`)}</button>
        <button aria-label="Batteria">${icon(21, 16, svg`<path fill="none" stroke="#fff" stroke-width="1.200" d="M5.500 9.500V13.500H18.500V4.500H8M18.500 7h2v4h-2M2 0v3M5 0v3M1 3h5v2q0 2-2.500 2Q1 7 1 5zM3.500 7v3h2"/><path fill="#fff" d="M7.500 6.500H17v5H7.500z"/>`)}</button>
        <button aria-label="Volume">${icon(20, 18, svg`<path fill="none" stroke="#fff" stroke-width="1.300" d="M.7 6.500h3L8 2.500v13L3.700 11.500h-3zM10.500 7q1.500 2 0 4M13.500 4.500q3 4.500 0 9M16.500 2q4.500 7 0 14"/>`)}</button>
      </div>
      <div class="clock">16:46<br />11/04/2021</div>
      <button class="note" aria-label="Notifiche">
        ${icon(34, 36, svg`<path fill="#fff" d="M1 5h20v17H6v4l-4-4H1z"/><path stroke="#253836" stroke-width="1.300" d="M4.500 9.500h13M4.500 13.500h13M4.500 17.500h8"/><circle cx="20.500" cy="25" r="10" fill="#2f3f3d" stroke="#9aa3a1" stroke-width="1.200"/><text x="20.500" y="30" text-anchor="middle" font-family="Noto Sans, sans-serif" font-size="13" font-weight="500" fill="#fff">10</text>`)}
      </button>
      <div class="desktop"></div>`;
  }
}

/* ---------- Desktop ---------- */

@customElement("app-root")
class AppRoot extends LitElement {
  static styles = [shared, css`
    :host { display: grid; grid-template-rows: auto 1fr auto; height: 100vh; overflow: hidden; }
    main {
      display: grid; grid-template-columns: 51px 1fr 53px 314px; min-height: 0; overflow: hidden;
      position: relative; background: #535353;
    }
    pathfinder-panel { position: absolute; left: 182px; top: 694px; }
  `];

  render() {
    return html`
      <menu-bar></menu-bar>
      <main>
        <tool-column></tool-column>
        <document-window></document-window>
        <panel-dock></panel-dock>
        <properties-panel></properties-panel>
        <pathfinder-panel></pathfinder-panel>
      </main>
      <task-bar></task-bar>`;
  }
}
